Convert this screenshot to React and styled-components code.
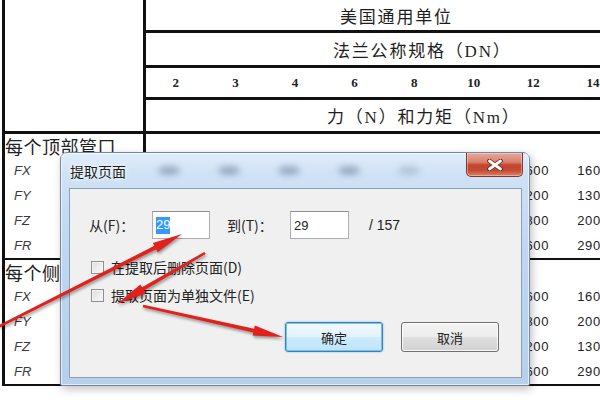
import React from "react";
import styled, { createGlobalStyle } from "styled-components";

const GlobalStyle = createGlobalStyle`
  html, body {
    margin: 0;
    padding: 0;
    background: #ffffff;
  }
  body {
    font-family: "Noto Sans CJK SC", "Noto Sans", sans-serif;
  }
`;

const CJK = `"Noto Sans CJK SC", "Noto Sans", sans-serif`;
const SERIF = `"Liberation Serif", "Noto Sans CJK SC", serif`;

const topRows = [
  { values: ["", "", "", "", "", "", "1600", "1600"] },
  { values: ["", "", "", "", "", "", "1200", "1300"] },
  { values: ["", "", "", "", "", "", "1800", "2000"] },
  { values: ["", "", "", "", "", "", "2600", "2900"] },
];

const sideRows = [
  { values: ["", "", "", "", "", "", "1600", "1600"] },
  { values: ["", "", "", "", "", "", "1800", "2000"] },
  { values: ["", "", "", "", "", "", "1200", "1300"] },
  { values: ["", "", "", "", "", "", "2600", "2900"] },
];

const labels = ["FX", "FY", "FZ", "FR"];
const sizes = ["2", "3", "4", "6", "8", "10", "12", "14"];

// 화살표: 가늘게 시작해서 끝에 긴 삼각형 머리
function Arrow({ x1, y1, x2, y2 }) {
  const dx = x2 - x1;
  const dy = y2 - y1;
  const len = Math.sqrt(dx * dx + dy * dy);
  const ux = dx / len;
  const uy = dy / len;
  const nx = -uy;
  const ny = ux;
  const head = 30;
  const bx = x2 - ux * head;
  const by = y2 - uy * head;
  const p = (x, y, w) => `${(x + nx * w).toFixed(1)},${(y + ny * w).toFixed(1)}`;
  const points = [
    p(x1, y1, 1.3),
    p(bx, by, 1.9),
    p(bx, by, 5.2),
    `${x2},${y2}`,
    p(bx, by, -5.2),
    p(bx, by, -1.9),
    p(x1, y1, -1.3),
  ].join(" ");
  return <polygon points={points} fill="#e3201b" />;
}

function CloseGlyph() {
  return (
    <svg width="16" height="12" viewBox="0 0 16 12">
      <path d="M2.5 2 L13.5 10 M13.5 2 L2.5 10" stroke="#5b2a22" strokeWidth="4.6" strokeLinecap="round" />
      <path d="M2.5 2 L13.5 10 M13.5 2 L2.5 10" stroke="#ffffff" strokeWidth="2.8" strokeLinecap="round" />
    </svg>
  );
}

function Section({ title, rows }) {
  return (
    <SectionBox>
      <SectionTitle>
        <TitleCell>{title}</TitleCell>
      </SectionTitle>
      {rows.map((row, i) => (
        <DataRow key={i}>
          <LabelCell>{labels[i]}</LabelCell>
          {row.values.map((v, j) => (
            <ValueCell key={j}>{v}</ValueCell>
          ))}
        </DataRow>
      ))}
    </SectionBox>
  );
}

function App() {
  return (
    <Page>
      <GlobalStyle />
      <Table>
        <Header>
          <Corner />
          <HeadRows>
            <HeadRow height={30} indent={194}>
              <HeadText>美国通用单位</HeadText>
            </HeadRow>
            <HeadRow height={32} indent={187}>
              <HeadText>法兰公称规格（DN）</HeadText>
            </HeadRow>
            <SizeRow>
              {sizes.map((s) => (
                <SizeCell key={s}>{s}</SizeCell>
              ))}
            </SizeRow>
            <HeadRow height={31} indent={181}>
              <HeadText>力（N）和力矩（Nm）</HeadText>
            </HeadRow>
          </HeadRows>
        </Header>
        <Section title="每个顶部管口" rows={topRows} />
        <Section title="每个侧面管口" rows={sideRows} />
      </Table>

      <Dialog>
        <TitleBar>
          <DialogTitle>提取页面</DialogTitle>
          <GlassBlobs>
            <Blob />
            <Blob />
            <Blob />
            <Blob />
            <Blob faint />
          </GlassBlobs>
          <CloseButton>
            <CloseGlyph />
          </CloseButton>
        </TitleBar>
        <Client>
          <RangeRow>
            <FieldLabel>从(F)：</FieldLabel>
            <Input width={58}>
              <Selected>29</Selected>
            </Input>
            <FieldLabel gap={17}>到(T)：</FieldLabel>
            <Input width={59}>29</Input>
            <Total>/ 157</Total>
          </RangeRow>
          <CheckRow first>
            <Box />
            <CheckLabel>在提取后删除页面(D)</CheckLabel>
          </CheckRow>
          <CheckRow>
            <Box />
            <CheckLabel>提取页面为单独文件(E)</CheckLabel>
          </CheckRow>
          <ButtonRow>
            <Button primary>确定</Button>
            <Button>取消</Button>
          </ButtonRow>
        </Client>
      </Dialog>

      <Arrows viewBox="0 0 600 400" width="600" height="400">
        <Arrow x1={-4} y1={328} x2={182} y2={234} />
        <Arrow x1={205} y1={253} x2={117} y2={304} />
        <Arrow x1={143} y1={306} x2={283} y2={337} />
      </Arrows>
    </Page>
  );
}

const Page = styled.div`
  position: relative;
  width: 600px;
  height: 400px;
  overflow: hidden;
  background: #ffffff;
`;

const Table = styled.div`
  margin-left: 2px;
  width: 626px;
  border-left: 3px solid #111;
`;

const Header = styled.div`
  display: grid;
  grid-template-columns: 141px 1fr;
`;

const Corner = styled.div`
  border-right: 3px solid #111;
  border-bottom: 3px solid #111;
`;

const HeadRows = styled.div`
  display: flex;
  flex-direction: column;
`;

const HeadRow = styled.div`
  height: ${(p) => p.height}px;
  border-bottom: 3px solid #111;
  display: flex;
  align-items: center;
  padding-left: ${(p) => p.indent}px;
`;

const HeadText = styled.span`
  font-family: ${SERIF};
  font-size: 17px;
  letter-spacing: 1.8px;
  color: #1e1e1e;
  white-space: nowrap;
`;

const SizeRow = styled.div`
  height: 29px;
  border-bottom: 3px solid #111;
  display: grid;
  grid-template-columns: repeat(8, 59.6px);
  align-items: center;
`;

const SizeCell = styled.div`
  text-align: center;
  font-family: "Liberation Serif", serif;
  font-weight: bold;
  font-size: 13px;
  color: #222;
`;

const SectionBox = styled.div`
  border-bottom: 2px solid #111;
`;

const SectionTitle = styled.div`
  height: 24px;
  display: flex;
`;

const TitleCell = styled.div`
  width: 138px;
  border-right: 3px solid #111;
  font-family: ${CJK};
  font-size: 18px;
  letter-spacing: 0.5px;
  line-height: 24px;
  color: #222;
  white-space: nowrap;
  overflow: hidden;
`;

const DataRow = styled.div`
  height: 25px;
  display: grid;
  grid-template-columns: 141px repeat(8, 59.6px);
  align-items: center;
`;

const LabelCell = styled.div`
  padding-left: 9px;
  font-family: "Liberation Sans", sans-serif;
  font-style: italic;
  font-size: 13px;
  color: #3a3a3a;
`;

const ValueCell = styled.div`
  text-align: center;
  font-family: "Liberation Sans", sans-serif;
  font-size: 13px;
  letter-spacing: 0.6px;
  color: #222;
`;

const Dialog = styled.div`
  position: absolute;
  left: 60px;
  top: 152px;
  width: 470px;
  height: 234px;
  box-sizing: border-box;
  display: flex;
  flex-direction: column;
  border: 1px solid #7189a6;
  border-radius: 7px 7px 2px 2px;
  background: linear-gradient(180deg, #d4e5f7 0%, #bfd7f0 40%, #b6d0ec 100%);
  box-shadow: 0 0 0 1px rgba(255, 255, 255, 0.6) inset, 2px 3px 8px rgba(0, 0, 0, 0.25);
`;

const TitleBar = styled.div`
  height: 35px;
  display: flex;
  align-items: center;
  padding-left: 9px;
  padding-right: 6px;
  background: linear-gradient(180deg, rgba(255, 255, 255, 0.3), rgba(255, 255, 255, 0) 60%);
`;

const DialogTitle = styled.div`
  font-family: ${CJK};
  font-size: 14px;
  color: #1b1b1b;
  text-shadow: 0 0 6px rgba(255, 255, 255, 0.95), 0 0 3px rgba(255, 255, 255, 0.9);
  white-space: nowrap;
`;

const GlassBlobs = styled.div`
  flex: 1;
  display: flex;
  gap: 38px;
  padding-left: 32px;
  align-items: center;
`;

const Blob = styled.div`
  width: 22px;
  height: 9px;
  border-radius: 50%;
  background: ${(p) => (p.faint ? "rgba(70, 90, 120, 0.22)" : "rgba(60, 80, 110, 0.38)")};
  filter: blur(3px);
`;

const CloseButton = styled.div`
  align-self: flex-start;
  width: 57px;
  height: 24px;
  box-sizing: border-box;
  display: flex;
  align-items: center;
  justify-content: center;
  border: 1px solid #7a3b30;
  border-top: none;
  border-radius: 0 0 5px 5px;
  background: linear-gradient(180deg, #e8a898 0%, #d8806e 40%, #c5452f 52%, #c34a32 75%, #dc8465 100%);
  box-shadow: 0 0 0 1px rgba(255, 255, 255, 0.35) inset;
`;

const Client = styled.div`
  flex: 1;
  margin: 0 7px 7px 8px;
  border: 1px solid #8a9fb8;
  background: #f0f0f0;
  padding: 21px 22px 0 19px;
  display: flex;
  flex-direction: column;
`;

const RangeRow = styled.div`
  display: flex;
  align-items: center;
  height: 30px;
`;

const FieldLabel = styled.div`
  width: 63px;
  margin-left: ${(p) => p.gap || 0}px;
  font-family: ${CJK};
  font-size: 14px;
  color: #222;
  white-space: nowrap;
`;

const Input = styled.div`
  width: ${(p) => p.width}px;
  height: 28px;
  box-sizing: border-box;
  border: 1px solid #abadb3;
  border-top-color: #8e8f8f;
  background: #ffffff;
  display: flex;
  align-items: center;
  padding-left: 3px;
  font-family: "Liberation Sans", sans-serif;
  font-size: 13px;
  color: #222;
`;

const Selected = styled.span`
  background: #3399ff;
  color: #ffffff;
  padding: 1px 0 2px;
  line-height: 14px;
`;

const Total = styled.div`
  margin-left: 20px;
  font-family: "Liberation Sans", sans-serif;
  font-size: 14px;
  color: #222;
`;

const CheckRow = styled.div`
  display: flex;
  align-items: center;
  height: 14px;
  margin-top: ${(p) => (p.first ? 20 : 14)}px;
  padding-left: 2px;
`;

const Box = styled.div`
  width: 13px;
  height: 13px;
  box-sizing: border-box;
  border: 1px solid #8f8f8f;
  background: linear-gradient(135deg, #dcdcdc, #fbfbfb);
  box-shadow: 0 0 0 1px #f4f4f4 inset;
`;

const CheckLabel = styled.div`
  margin-left: 7px;
  font-family: ${CJK};
  font-size: 14px;
  color: #222;
  white-space: nowrap;
`;

const ButtonRow = styled.div`
  display: flex;
  justify-content: flex-end;
  gap: 18px;
  margin-top: 20px;
`;

const Button = styled.div`
  width: 98px;
  height: 30px;
  box-sizing: border-box;
  border-radius: 3px;
  display: flex;
  align-items: center;
  justify-content: center;
  font-family: ${CJK};
  font-size: 13px;
  color: #222;
  border: 1px solid ${(p) => (p.primary ? "#3c7fb1" : "#707070")};
  background: ${(p) =>
    p.primary
      ? "linear-gradient(180deg, #f1f9fe 0%, #e3f3fd 48%, #cdebfc 52%, #bfe4fa 100%)"
      : "linear-gradient(180deg, #f4f4f4 0%, #ececec 48%, #dedede 52%, #d2d2d2 100%)"};
  box-shadow: ${(p) =>
    p.primary
      ? "0 0 0 1px #74c3ee inset, 0 0 2px #62b6e8"
      : "0 0 0 1px rgba(255, 255, 255, 0.8) inset"};
`;

const Arrows = styled.svg`
  position: absolute;
  left: 0;
  top: 0;
  pointer-events: none;
  filter: drop-shadow(1px 2px 1.5px rgba(0, 0, 0, 0.4));
`;

export default App;
